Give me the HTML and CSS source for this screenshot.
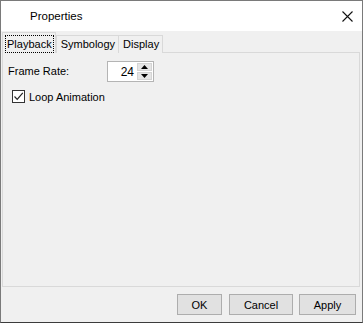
FILE: index.html
```html
<!DOCTYPE html>
<html lang="en">
<head>
    <meta charset="UTF-8">
    <title>Properties</title>
    <link rel="stylesheet" href="styles.css">
</head>
<body>

<div class="window">
    <div class="titlebar">
        <span class="title">Properties</span>
        <span class="close">
            <svg width="11" height="11" viewBox="0 0 11 11"><path d="M0.5 0.5 L10.5 10.5 M10.5 0.5 L0.5 10.5" stroke="#111" stroke-width="1.1" fill="none"/></svg>
        </span>
    </div>

    <div class="client">
        <div class="tabs">
            <div class="tab active"><span class="focus">Playback</span></div>
            <div class="tab">Symbology</div>
            <div class="tab">Display</div>
        </div>

        <div class="panel">
            <div class="row">
                <label class="label">Frame Rate:</label>
                <div class="spinner">
                    <span class="value">24</span>
                    <div class="spin">
                        <div class="spin-btn">
                            <svg width="7" height="4" viewBox="0 0 7 4"><path d="M3.5 0 L7 4 L0 4 Z" fill="#000"/></svg>
                        </div>
                        <div class="spin-btn">
                            <svg width="7" height="4" viewBox="0 0 7 4"><path d="M0 0 L7 0 L3.5 4 Z" fill="#000"/></svg>
                        </div>
                    </div>
                </div>
            </div>

            <div class="check-row">
                <span class="checkbox">
                    <svg width="11" height="11" viewBox="0 0 11 11"><path d="M1.5 5.5 L4.2 8.3 L9.8 1.8" stroke="#222" stroke-width="1.2" fill="none"/></svg>
                </span>
                <span>Loop Animation</span>
            </div>
        </div>

        <div class="footer">
            <button class="btn btn-ok">OK</button>
            <button class="btn btn-cancel">Cancel</button>
            <button class="btn btn-apply">Apply</button>
        </div>
    </div>
</div>

</body>
</html>
```

FILE: styles.css
```css
html, body {
    margin: 0;
    padding: 0;
}
body {
    font-family: "Liberation Sans", Arial, sans-serif;
    font-size: 11px;
    color: #000;
    background-color: #f0f0f0;
}
.window {
    width: 363px;
    height: 323px;
    box-sizing: border-box;
    border: 1px solid #7a7a7a;
    border-bottom-color: #3c3c3c;
    display: flex;
    flex-direction: column;
}
.titlebar {
    height: 30px;
    background-color: #fff;
    display: flex;
    align-items: center;
    justify-content: space-between;
    padding-left: 29px;
    padding-right: 9px;
    flex-shrink: 0;
}
.title {
    font-size: 11.5px;
    margin-top: -1px;
}
.close {
    display: flex;
    width: 11px;
    height: 11px;
    margin-top: 1px;
}
.client {
    flex: 1;
    display: flex;
    flex-direction: column;
    padding: 1px 2px 0 1px;
    background-color: #f0f0f0;
}
.tabs {
    display: flex;
    align-items: flex-end;
    height: 21px;
    position: relative;
    z-index: 1;
    margin-bottom: -1px;
}
.tab {
    height: 18px;
    box-sizing: border-box;
    border: 1px solid #d9d9d9;
    border-bottom: none;
    background-color: #f0f0f0;
    padding: 0 3px 0 4px;
    line-height: 17px;
    margin-left: -1px;
}
.tab:first-child {
    margin-left: 0;
}
.tab.active {
    height: 21px;
    padding: 2px 1px 0 2px;
    line-height: 16px;
    margin-right: 1px;
}
.focus {
    display: block;
    border: 1px dotted #000;
    padding: 0 1px 0 1px;
}
.panel {
    flex: 1;
    border: 1px solid #d9d9d9;
    background-color: #f0f0f0;
    padding: 8px 5px;
}
.row {
    display: flex;
    align-items: center;
    height: 21px;
}
.label {
    width: 99px;
    margin-top: -1px;
}
.spinner {
    width: 47px;
    height: 21px;
    box-sizing: border-box;
    border: 1px solid #b4b4b4;
    background-color: #fff;
    display: flex;
    align-items: center;
}
.value {
    flex: 1;
    text-align: right;
    font-size: 12px;
    padding-right: 3px;
}
.spin {
    width: 15px;
    height: 17px;
    display: flex;
    flex-direction: column;
    margin-right: 1px;
    gap: 1px;
}
.spin-btn {
    flex: 1;
    background-color: #e5e5e5;
    border: 1px solid #d4d4d4;
    display: flex;
    align-items: center;
    justify-content: center;
}
.check-row {
    display: flex;
    align-items: center;
    gap: 4px;
    margin-top: 8px;
    margin-left: 4px;
}
.checkbox {
    width: 13px;
    height: 13px;
    box-sizing: border-box;
    border: 1px solid #333;
    background-color: #fff;
    display: flex;
    align-items: center;
    justify-content: center;
}
.footer {
    height: 35px;
    display: flex;
    justify-content: flex-end;
    align-items: flex-start;
    padding-top: 7px;
    padding-right: 4px;
    gap: 7px;
    box-sizing: border-box;
}
.btn {
    height: 21px;
    font-family: inherit;
    font-size: 11px;
    background-color: #e1e1e1;
    border: 1px solid #adadad;
    padding: 0;
    margin: 0;
    cursor: pointer;
}
.btn-ok {
    width: 45px;
}
.btn-cancel {
    width: 64px;
    margin-right: -1px;
}
.btn-apply {
    width: 57px;
}
```
